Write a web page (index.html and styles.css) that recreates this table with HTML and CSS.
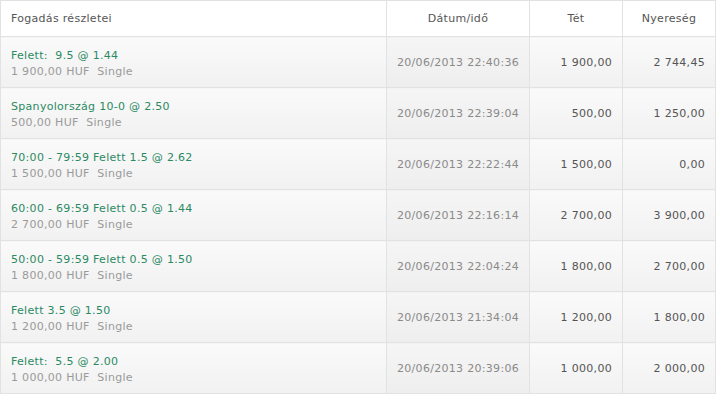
FILE: index.html
```html
<!DOCTYPE html>
<html lang="hu">
<head>
<meta charset="utf-8">
<title>Fogadások</title>
<link rel="stylesheet" href="styles.css">
</head>
<body>
<table class="bets">
  <colgroup>
    <col class="c-desc"><col class="c-date"><col class="c-stake"><col class="c-win">
  </colgroup>
  <thead>
    <tr>
      <th class="desc">Fogadás részletei</th>
      <th>Dátum/idő</th>
      <th>Tét</th>
      <th>Nyereség</th>
    </tr>
  </thead>
  <tbody>
    <tr>
      <td class="desc"><div class="title">Felett:  9.5 @ 1.44</div><div class="sub">1 900,00 HUF  Single</div></td>
      <td class="date">20/06/2013 22:40:36</td>
      <td class="num">1 900,00</td>
      <td class="num">2 744,45</td>
    </tr>
    <tr>
      <td class="desc"><div class="title">Spanyolország 10-0 @ 2.50</div><div class="sub">500,00 HUF  Single</div></td>
      <td class="date">20/06/2013 22:39:04</td>
      <td class="num">500,00</td>
      <td class="num">1 250,00</td>
    </tr>
    <tr>
      <td class="desc"><div class="title">70:00 - 79:59 Felett 1.5 @ 2.62</div><div class="sub">1 500,00 HUF  Single</div></td>
      <td class="date">20/06/2013 22:22:44</td>
      <td class="num">1 500,00</td>
      <td class="num">0,00</td>
    </tr>
    <tr>
      <td class="desc"><div class="title">60:00 - 69:59 Felett 0.5 @ 1.44</div><div class="sub">2 700,00 HUF  Single</div></td>
      <td class="date">20/06/2013 22:16:14</td>
      <td class="num">2 700,00</td>
      <td class="num">3 900,00</td>
    </tr>
    <tr>
      <td class="desc"><div class="title">50:00 - 59:59 Felett 0.5 @ 1.50</div><div class="sub">1 800,00 HUF  Single</div></td>
      <td class="date">20/06/2013 22:04:24</td>
      <td class="num">1 800,00</td>
      <td class="num">2 700,00</td>
    </tr>
    <tr>
      <td class="desc"><div class="title">Felett 3.5 @ 1.50</div><div class="sub">1 200,00 HUF  Single</div></td>
      <td class="date">20/06/2013 21:34:04</td>
      <td class="num">1 200,00</td>
      <td class="num">1 800,00</td>
    </tr>
    <tr>
      <td class="desc"><div class="title">Felett:  5.5 @ 2.00</div><div class="sub">1 000,00 HUF  Single</div></td>
      <td class="date">20/06/2013 20:39:06</td>
      <td class="num">1 000,00</td>
      <td class="num">2 000,00</td>
    </tr>
  </tbody>
</table>
</body>
</html>
```
FILE: styles.css
```css
html, body {
  margin: 0;
  padding: 0;
  background: #ffffff;
}
body {
  font-family: "DejaVu Sans", Verdana, sans-serif;
  font-size: 11px;
  letter-spacing: 0.3px;
}
.bets {
  border-collapse: collapse;
  table-layout: fixed;
  width: 715px;
}
.c-desc { width: 386px; }
.c-date { width: 143px; }
.c-stake { width: 93px; }
.c-win { width: 93px; }
.bets th, .bets td {
  border: 1px solid #e2e2e2;
  padding: 0 10px;
  white-space: pre;
}
.bets th {
  height: 35px;
  font-weight: normal;
  color: #555555;
  text-align: center;
  background: #ffffff;
}
.bets th.desc {
  text-align: left;
}
.bets td {
  height: 50px;
  background: linear-gradient(#fafafa, #f1f1f1);
  vertical-align: middle;
}
.bets td.desc {
  height: 48px;
  padding-top: 2px;
}
.bets td.date {
  text-align: center;
  color: #8a8a8a;
  background: linear-gradient(#f5f5f5, #eeeeee);
}
.bets td.num {
  text-align: right;
  color: #555555;
}
.title {
  color: #2b8a63;
  line-height: 15px;
}
.sub {
  color: #9a9a9a;
  line-height: 15px;
  margin-top: 1px;
}
```
